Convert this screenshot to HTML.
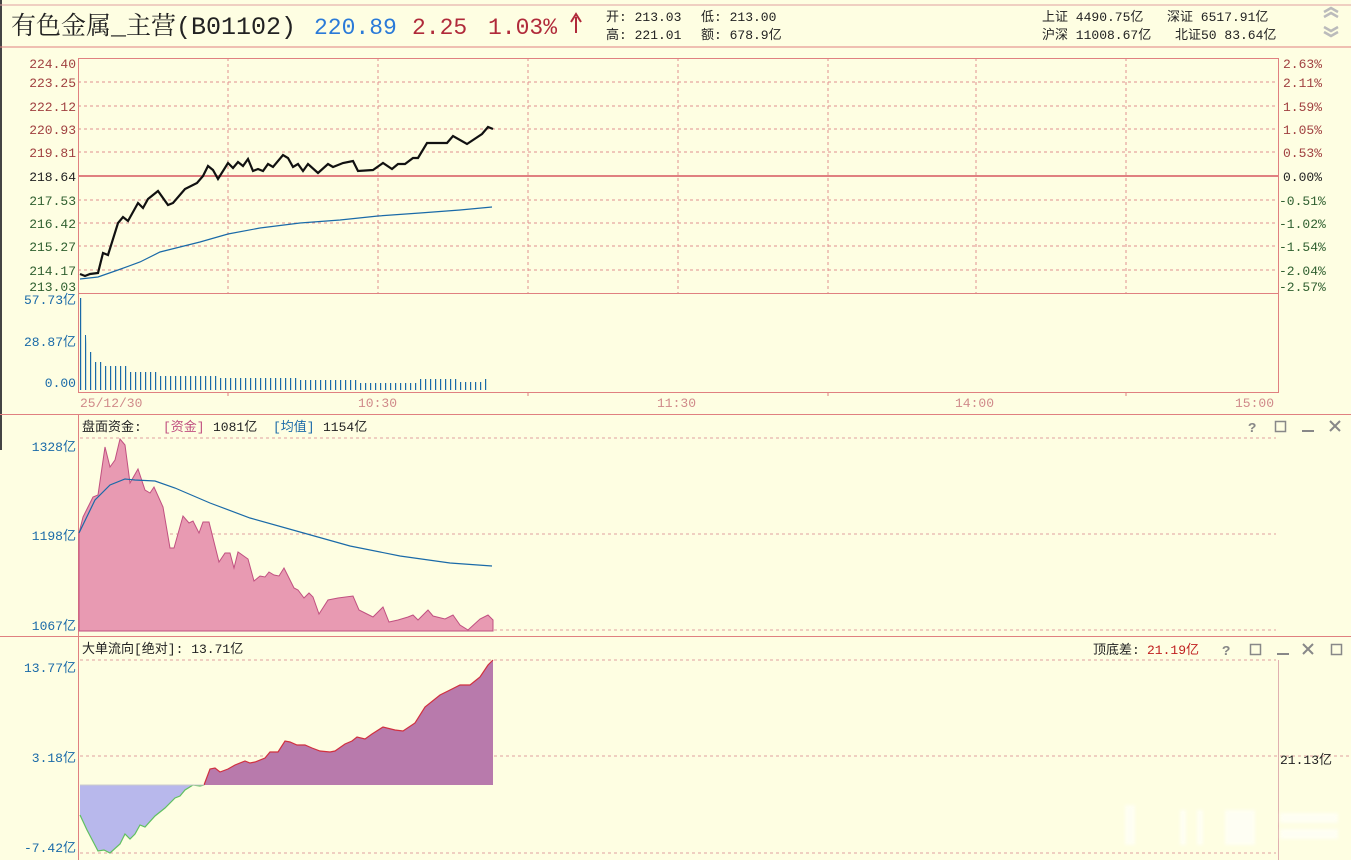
<!DOCTYPE html>
<html><head><meta charset="utf-8">
<style>
body{margin:0;background:#fefee2;width:1351px;height:860px;overflow:hidden;position:relative;font-family:"Liberation Mono","Noto Sans CJK SC",monospace;}
svg{position:absolute;left:0;top:0}
text{font-family:"Liberation Mono","Noto Sans CJK SC",monospace;font-size:13px}
</style></head><body>
<svg width="1351" height="860" viewBox="0 0 1351 860">
<defs>
<pattern id="vb" x="80" y="0" width="5" height="860" patternUnits="userSpaceOnUse">
<rect x="0" y="0" width="1.2" height="860" fill="#1a6aa8"/>
</pattern>
<filter id="bl"><feGaussianBlur stdDeviation="1.5"/></filter>
</defs>
<rect width="1351" height="860" fill="#fefee2"/>
<rect x="0" y="0" width="2" height="450" fill="#444"/>
<!-- header -->
<line x1="0" y1="5" x2="1351" y2="5" stroke="#e0a0a0"/>
<line x1="0" y1="47" x2="1351" y2="47" stroke="#e08080"/>
<text x="11" y="34" style="font-size:25px;font-family:'Liberation Mono','Noto Serif CJK SC',serif" fill="#222">有色金属_主营(B01102)</text>
<text x="314" y="34" style="font-size:23px" fill="#2a7ad8">220.89</text>
<text x="412" y="34" style="font-size:23px" fill="#b02a3a">2.25</text>
<text x="488" y="34" style="font-size:23px" fill="#b02a3a">1.03%</text>
<path d="M576 33 V17 M571 22 L576 14 L581 22" stroke="#b02a3a" stroke-width="2" fill="none"/>
<text x="606" y="21" fill="#222">开: 213.03</text>
<text x="606" y="39" fill="#222">高: 221.01</text>
<text x="701" y="21" fill="#222">低: 213.00</text>
<text x="701" y="39" fill="#222">额: 678.9亿</text>
<text x="1042" y="21" fill="#222">上证 4490.75亿</text>
<text x="1167" y="21" fill="#222">深证 6517.91亿</text>
<text x="1042" y="39" fill="#222">沪深 11008.67亿</text>
<text x="1175" y="39" fill="#222">北证50 83.64亿</text>
<path d="M1324 12 l7 -4 l7 4 M1324 17 l7 -4 l7 4" stroke="#bbb" stroke-width="2.5" fill="none"/>
<path d="M1324 27 l7 4 l7 -4 M1324 32 l7 4 l7 -4" stroke="#bbb" stroke-width="2.5" fill="none"/>

<!-- main chart grid -->
<g stroke="#e09090" stroke-dasharray="3,3" fill="none">
<path d="M78 82H1278M78 106H1278M78 129H1278M78 152H1278M78 200H1278M78 223H1278M78 246H1278M78 270H1278"/>
<path d="M228 58V293M378 58V293M528 58V293M678 58V293M828 58V293M976 58V293M1126 58V293"/>
</g>
<rect x="78.5" y="58.5" width="1200" height="334" fill="none" stroke="#e08080"/>
<line x1="78" y1="293.5" x2="1278" y2="293.5" stroke="#e08080"/>
<line x1="78" y1="176" x2="1278" y2="176" stroke="#e08080" stroke-width="2"/>
<g fill="#a04040" text-anchor="end">
<text x="76" y="68">224.40</text><text x="76" y="87">223.25</text><text x="76" y="111">222.12</text>
<text x="76" y="134">220.93</text><text x="76" y="157">219.81</text>
<text x="76" y="181" fill="#222">218.64</text>
<text x="76" y="205" fill="#306030">217.53</text><text x="76" y="228" fill="#306030">216.42</text>
<text x="76" y="251" fill="#306030">215.27</text><text x="76" y="275" fill="#306030">214.17</text>
<text x="76" y="291" fill="#306030">213.03</text>
</g>
<g fill="#a04040">
<text x="1283" y="68">2.63%</text><text x="1283" y="87">2.11%</text><text x="1283" y="111">1.59%</text>
<text x="1283" y="134">1.05%</text><text x="1283" y="157">0.53%</text>
<text x="1283" y="181" fill="#222">0.00%</text>
<text x="1279" y="205" fill="#306030">-0.51%</text><text x="1279" y="228" fill="#306030">-1.02%</text>
<text x="1279" y="251" fill="#306030">-1.54%</text><text x="1279" y="275" fill="#306030">-2.04%</text>
<text x="1279" y="291" fill="#306030">-2.57%</text>
</g>
<polyline fill="none" stroke="#1a6aa8" stroke-width="1.2" points="80,279 98,277 118,270 140,262 160,252 200,242 228,234 260,228 300,223 340,220 378,216 420,213 460,210 492,207"/>
<polyline fill="none" stroke="#111" stroke-width="2.2" points="80,274 85,276 90,274 98,273 103,253 108,255 118,223 123,217 128,221 138,203 143,208 148,199 158,191 168,205 173,203 185,189 197,183 203,176 208,166 213,170 218,179 228,163 233,168 238,162 243,166 248,159 253,171 258,169 263,171 268,164 273,167 283,155 288,158 293,167 298,164 303,171 308,164 318,173 328,164 333,167 343,163 353,161 358,171 373,170 383,163 392,169 398,164 405,164 413,158 418,158 427,143 437,143 447,143 453,136 467,144 482,134 488,127 493,129"/>

<!-- volume -->
<g fill="#1a6aa8" text-anchor="end">
<text x="76" y="304">57.73亿</text><text x="76" y="346">28.87亿</text><text x="76" y="387">0.00</text>
</g>
<polygon fill="url(#vb)" points="80,390 80,298 82,298 83,335 86,335 87,352 92,352 92,362 102,362 102,366 130,366 130,372 160,372 160,376 220,376 220,378 300,378 300,380 360,380 360,383 420,383 420,379 460,379 460,382 485,382 485,379 490,379 490,390"/>
<!-- time row -->
<g stroke="#e08080"><path d="M228 392v4M528 392v4M828 392v4M1126 392v4"/></g>
<line x1="0" y1="414.5" x2="1351" y2="414.5" stroke="#e08080"/>
<g fill="#d08a8a">
<text x="80" y="407">25/12/30</text><text x="358" y="407">10:30</text><text x="657" y="407">11:30</text>
<text x="955" y="407">14:00</text><text x="1235" y="407">15:00</text>
</g>

<!-- panel 2 -->
<line x1="78.5" y1="414" x2="78.5" y2="860" stroke="#e08080"/>
<g stroke="#e0a0a0" stroke-dasharray="3,3"><path d="M80 438H1276M80 534H1276M80 630H1276"/></g>
<text x="82" y="431" fill="#222">盘面资金:</text>
<text x="163" y="431" fill="#c05080">[资金]</text>
<text x="213" y="431" fill="#222">1081亿</text>
<text x="273" y="431" fill="#1a6aa8">[均值]</text>
<text x="323" y="431" fill="#222">1154亿</text>
<g fill="#1a6aa8" text-anchor="end">
<text x="76" y="451">1328亿</text><text x="76" y="540">1198亿</text><text x="76" y="630">1067亿</text>
</g>
<polygon fill="#e89ab2" stroke="#c05080" stroke-width="1" points="79,631 79,533 83,517 93,497 98,495 105,447 110,467 115,460 120,439 125,445 130,483 138,469 145,490 150,493 154,487 163,507 170,548 174,548 183,516 189,523 193,521 199,533 203,522 209,522 219,562 225,553 230,553 234,568 238,552 248,559 254,581 260,576 265,577 269,572 274,575 279,576 284,568 294,588 298,590 304,598 309,593 313,597 319,614 328,600 338,598 353,596 359,610 367,614 373,617 383,607 389,622 398,620 408,617 413,615 418,620 428,610 433,616 445,619 453,615 460,625 468,630 480,619 488,615 493,620 493,631"/>
<polyline fill="none" stroke="#1a6aa8" stroke-width="1.2" points="79,533 95,500 110,485 125,479 135,480 155,481 175,488 210,503 250,518 300,532 350,546 400,556 450,563 492,566"/>
<text x="1248" y="432" fill="#888" style="font-size:14px;font-weight:bold">?</text>
<rect x="1275.5" y="421.5" width="10" height="10" fill="none" stroke="#888" stroke-width="1.5"/>
<line x1="1302" y1="431" x2="1314" y2="431" stroke="#888" stroke-width="2"/>
<path d="M1330 421l10 10M1340 421l-10 10" stroke="#888" stroke-width="2"/>
<line x1="0" y1="636.5" x2="1351" y2="636.5" stroke="#e08080"/>

<!-- panel 3 -->
<g stroke="#e0a0a0" stroke-dasharray="3,3"><path d="M80 660H1276M80 756H1351M80 853H1276"/></g>
<line x1="1278.5" y1="660" x2="1278.5" y2="860" stroke="#e0b0b0"/>
<text x="82" y="653" fill="#222">大单流向[绝对]:  13.71亿</text>
<text x="1093" y="654" fill="#222">顶底差:</text>
<text x="1147" y="654" fill="#c02020">21.19亿</text>
<text x="1222" y="655" fill="#888" style="font-size:14px;font-weight:bold">?</text>
<rect x="1250.5" y="644.5" width="10" height="10" fill="none" stroke="#888" stroke-width="1.5"/>
<line x1="1277" y1="654" x2="1289" y2="654" stroke="#888" stroke-width="2"/>
<path d="M1303 644l10 10M1313 644l-10 10" stroke="#888" stroke-width="2"/>
<rect x="1331.5" y="644.5" width="10" height="10" fill="none" stroke="#888" stroke-width="1.5"/>
<g fill="#1a6aa8" text-anchor="end">
<text x="76" y="672">13.77亿</text><text x="76" y="762">3.18亿</text><text x="76" y="852">-7.42亿</text>
</g>
<text x="1280" y="764" fill="#222">21.13亿</text>
<polygon fill="#b8b8ec" stroke="none" points="80,785 80,815 87,830 98,851 104,850 110,853 120,844 125,834 130,839 135,834 140,825 145,827 155,816 165,808 175,798 180,796 185,790 193,785 200,786 204,785"/>
<polyline fill="none" stroke="#60c060" stroke-width="1.2" points="80,815 87,830 98,851 104,850 110,853 120,844 125,834 130,839 135,834 140,825 145,827 155,816 165,808 175,798 180,796 185,790 193,785 200,786 204,785"/>
<polygon fill="#b87aac" stroke="none" points="204,785 210,769 215,768 220,772 228,769 235,765 245,761 250,763 255,762 265,758 270,752 278,752 285,741 290,742 297,745 305,745 312,748 320,751 330,752 335,751 345,744 352,741 357,737 365,739 372,734 383,727 395,730 403,731 415,723 425,707 440,695 450,690 460,685 470,685 480,677 488,665 493,660 493,785"/>
<polyline fill="none" stroke="#d03040" stroke-width="1.2" points="204,785 210,769 215,768 220,772 228,769 235,765 245,761 250,763 255,762 265,758 270,752 278,752 285,741 290,742 297,745 305,745 312,748 320,751 330,752 335,751 345,744 352,741 357,737 365,739 372,734 383,727 395,730 403,731 415,723 425,707 440,695 450,690 460,685 470,685 480,677 488,665 493,660"/>
<line x1="80" y1="785" x2="204" y2="785" stroke="#ccc"/>
<!-- watermark -->
<g fill="#fff" opacity="0.6" filter="url(#bl)">
<rect x="1125" y="805" width="10" height="40"/><rect x="1180" y="810" width="6" height="35"/><rect x="1197" y="810" width="6" height="35"/>
<rect x="1225" y="810" width="30" height="35"/><rect x="1280" y="813" width="58" height="10"/><rect x="1280" y="829" width="58" height="10"/>
</g>
</svg>
</body></html>
